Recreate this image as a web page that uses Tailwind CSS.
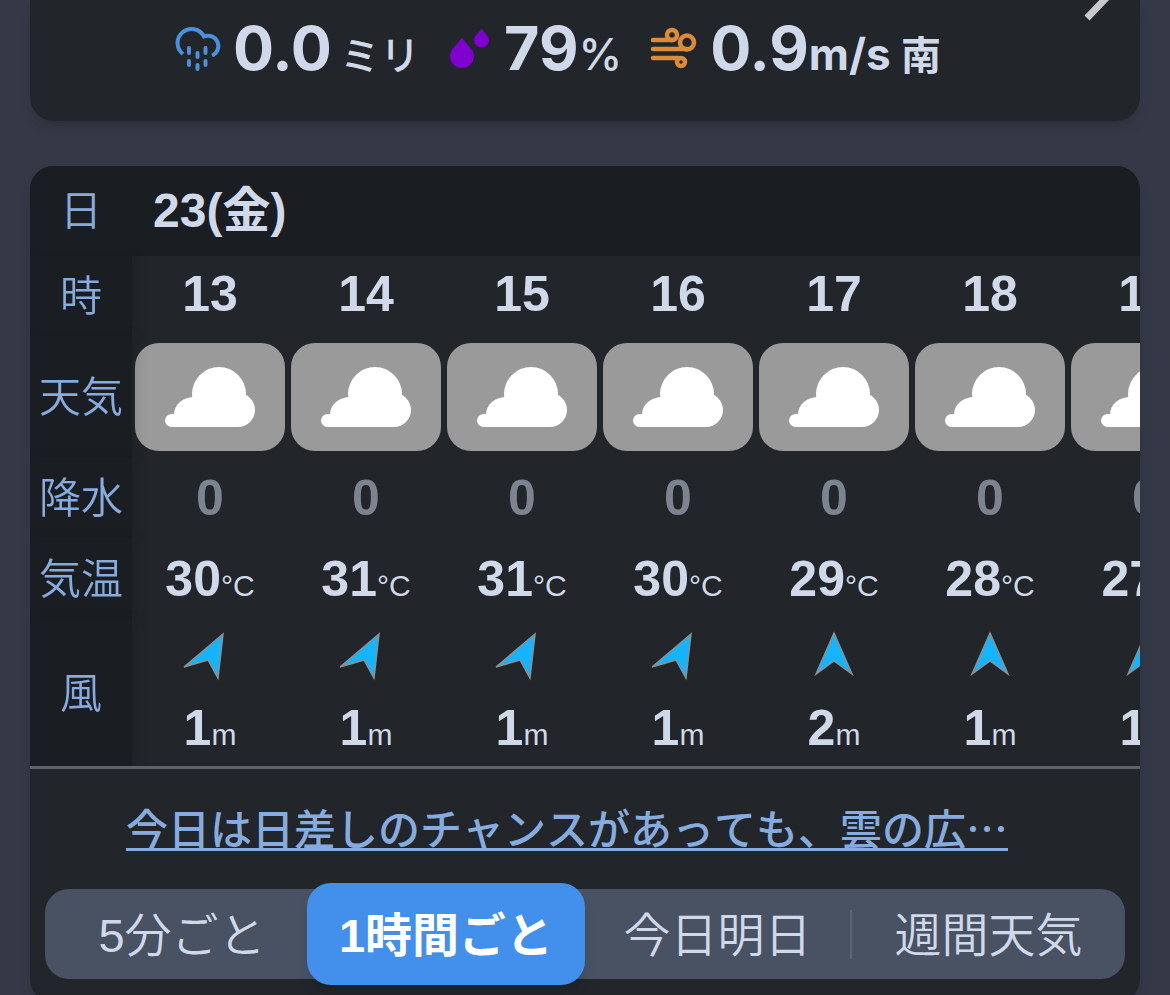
<!doctype html>
<html lang="ja">
<head>
  <meta charset="UTF-8" />
  <meta name="viewport" content="width=device-width, initial-scale=1.0" />
  <script src="https://cdn.jsdelivr.net/npm/@tailwindcss/browser@4"></script>
  <title>天気予報</title>
</head>
<body class="bg-[#353947] font-['Liberation_Sans','Noto_Sans_CJK_JP',sans-serif] text-[#d0d9e9]">
  <!-- shared icons -->
  <svg class="hidden">
    <symbol id="cloud" viewBox="0 0 150 108">
      <circle cx="84" cy="51" r="27" />
      <circle cx="103" cy="67" r="17" />
      <path d="M39 72C39 61 48 54 60 54H103V84H39Z" />
      <rect x="30" y="71" width="75" height="13" rx="6.5" />
    </symbol>
    <symbol id="wind-ne" viewBox="0 0 60 54">
      <path d="M43 5 38 49 28 31 4 38Z" />
    </symbol>
    <symbol id="wind-n" viewBox="0 0 60 54">
      <path d="M30 4 48 45 30 32 12 45Z" />
    </symbol>
  </svg>

  <main class="px-[30px] pb-8">
    <!-- current conditions -->
    <section class="relative rounded-b-3xl bg-[#22262b] pt-[18px] pb-[43px] pr-14 shadow-lg">
      <a href="#" aria-label="詳細" class="absolute -top-8 right-7">
        <svg class="h-14 w-7" viewBox="0 0 28 56" fill="none" stroke="#c9c9cc" stroke-width="7">
          <path d="M3 6 24 28 3 50" />
        </svg>
      </a>
      <div class="flex h-15 items-center justify-center gap-7 font-['Inter','Noto_Sans_CJK_JP',sans-serif] font-[650] whitespace-nowrap">
        <div class="flex items-center gap-3">
          <svg class="size-12 overflow-visible" viewBox="0 0 48 48" fill="none" stroke="#4a90dc" stroke-width="4">
            <path d="M10 30A14 14 0 1 1 31 12.500A10 10 0 1 1 39 31.500" />
            <path stroke-linecap="round" d="M16 24v5M16 37v4M24.500 29v4M24.500 41v4M32.500 24v5M32.500 37v4" />
          </svg>
          <p class="text-[61px] leading-[60px]">0.0<span class="ml-2 font-['Noto_Sans_CJK_JP'] text-[40px] leading-none font-medium">ミリ</span></p>
        </div>
        <div class="flex items-center gap-3">
          <svg class="h-12 w-11" viewBox="0 0 44 48" fill="#8000d2">
            <path d="M14 13.500C17 19 26 25 26 32A12 12 0 0 1 2 32C2 25 11 19 14 13.500Z" />
            <path d="M33.500 4.500C35.500 8.500 41 11.500 41 16A7.500 7.500 0 0 1 26 16C26 11.500 31.500 8.500 33.500 4.500Z" />
          </svg>
          <p class="text-[61px] leading-[60px]">79<span class="text-[44px] leading-none font-medium">%</span></p>
        </div>
        <div class="flex items-center gap-3">
          <svg class="size-12" viewBox="0 0 48 48" fill="none" stroke="#dc8b37" stroke-width="4.5" stroke-linecap="round">
            <path d="M3 16H23M3 25H37M3 34H29" />
            <circle cx="22" cy="11" r="5" />
            <circle cx="37" cy="18.500" r="7" />
            <circle cx="31" cy="38" r="4" />
          </svg>
          <p class="text-[61px] leading-[60px]">0.9<span class="text-[44px] leading-none">m/s <span class="text-[40px] font-bold">南</span></span></p>
        </div>
      </div>
    </section>

    <!-- hourly forecast -->
    <section class="mt-[45px] overflow-hidden rounded-3xl bg-[#22262b] pb-6 shadow-lg">
      <div class="overflow-x-auto border-b-3 border-[#5d636d] [scrollbar-width:none]">
        <table class="w-[1194px] table-fixed border-separate border-spacing-0 text-center text-[50px] leading-none font-bold">
          <colgroup>
            <col class="w-[102px]" />
            <col span="7" class="w-[156px]" />
          </colgroup>
          <tr class="h-[90px] bg-[#1a1d21]">
            <th scope="row" class="sticky left-0 z-10 bg-[#1a1d21] pt-0.5 text-[42px] font-[350] text-[#86acdf]">日</th>
            <td colspan="7" class="pl-[21px] text-left text-[48px]">23(金)</td>
          </tr>
          <tr class="h-20">
            <th scope="row" class="sticky left-0 z-10 bg-[#1a1d21] pt-0.5 text-[42px] font-[350] text-[#86acdf] shadow-[4px_0_12px_#0000001a]">時</th>
            <td class="pb-1">13</td>
            <td class="pb-1">14</td>
            <td class="pb-1">15</td>
            <td class="pb-1">16</td>
            <td class="pb-1">17</td>
            <td class="pb-1">18</td>
            <td class="pb-1">19</td>
          </tr>
          <tr class="h-[122px]">
            <th scope="row" class="sticky left-0 z-10 bg-[#1a1d21] pt-0.5 text-[42px] font-[350] text-[#86acdf] shadow-[4px_0_12px_#0000001a]">天気</th>
            <td class="px-[3px]"><svg role="img" aria-label="曇り" class="h-[108px] w-full rounded-3xl bg-[#9a9a9a] fill-white"><use href="#cloud" /></svg></td>
            <td class="px-[3px]"><svg role="img" aria-label="曇り" class="h-[108px] w-full rounded-3xl bg-[#9a9a9a] fill-white"><use href="#cloud" /></svg></td>
            <td class="px-[3px]"><svg role="img" aria-label="曇り" class="h-[108px] w-full rounded-3xl bg-[#9a9a9a] fill-white"><use href="#cloud" /></svg></td>
            <td class="px-[3px]"><svg role="img" aria-label="曇り" class="h-[108px] w-full rounded-3xl bg-[#9a9a9a] fill-white"><use href="#cloud" /></svg></td>
            <td class="px-[3px]"><svg role="img" aria-label="曇り" class="h-[108px] w-full rounded-3xl bg-[#9a9a9a] fill-white"><use href="#cloud" /></svg></td>
            <td class="px-[3px]"><svg role="img" aria-label="曇り" class="h-[108px] w-full rounded-3xl bg-[#9a9a9a] fill-white"><use href="#cloud" /></svg></td>
            <td class="px-[3px]"><svg role="img" aria-label="曇り" class="h-[108px] w-full rounded-3xl bg-[#9a9a9a] fill-white"><use href="#cloud" /></svg></td>
          </tr>
          <tr class="h-20 text-[#7d838f]">
            <th scope="row" class="sticky left-0 z-10 bg-[#1a1d21] pt-0.5 text-[42px] font-[350] text-[#86acdf] shadow-[4px_0_12px_#0000001a]">降水</th>
            <td>0</td>
            <td>0</td>
            <td>0</td>
            <td>0</td>
            <td>0</td>
            <td>0</td>
            <td>0</td>
          </tr>
          <tr class="h-[82px]">
            <th scope="row" class="sticky left-0 z-10 bg-[#1a1d21] pt-0.5 text-[42px] font-[350] text-[#86acdf] shadow-[4px_0_12px_#0000001a]">気温</th>
            <td>30<span class="text-[30px] font-normal">°C</span></td>
            <td>31<span class="text-[30px] font-normal">°C</span></td>
            <td>31<span class="text-[30px] font-normal">°C</span></td>
            <td>30<span class="text-[30px] font-normal">°C</span></td>
            <td>29<span class="text-[30px] font-normal">°C</span></td>
            <td>28<span class="text-[30px] font-normal">°C</span></td>
            <td>27<span class="text-[30px] font-normal">°C</span></td>
          </tr>
          <tr class="h-[146px]">
            <th scope="row" class="sticky left-0 z-10 bg-[#1a1d21] pt-0.5 text-[42px] font-[350] text-[#86acdf] shadow-[4px_0_12px_#0000001a]">風</th>
            <td class="pb-1"><svg class="mx-auto mb-5 h-[54px] w-[60px] fill-[#14b4ff] stroke-[#8f8f8f] stroke-[1.5]"><use href="#wind-ne" /></svg>1<span class="text-[30px] font-normal">m</span></td>
            <td class="pb-1"><svg class="mx-auto mb-5 h-[54px] w-[60px] fill-[#14b4ff] stroke-[#8f8f8f] stroke-[1.5]"><use href="#wind-ne" /></svg>1<span class="text-[30px] font-normal">m</span></td>
            <td class="pb-1"><svg class="mx-auto mb-5 h-[54px] w-[60px] fill-[#14b4ff] stroke-[#8f8f8f] stroke-[1.5]"><use href="#wind-ne" /></svg>1<span class="text-[30px] font-normal">m</span></td>
            <td class="pb-1"><svg class="mx-auto mb-5 h-[54px] w-[60px] fill-[#14b4ff] stroke-[#8f8f8f] stroke-[1.5]"><use href="#wind-ne" /></svg>1<span class="text-[30px] font-normal">m</span></td>
            <td class="pb-1"><svg class="mx-auto mb-5 h-[54px] w-[60px] fill-[#14b4ff] stroke-[#8f8f8f] stroke-[1.5]"><use href="#wind-n" /></svg>2<span class="text-[30px] font-normal">m</span></td>
            <td class="pb-1"><svg class="mx-auto mb-5 h-[54px] w-[60px] fill-[#14b4ff] stroke-[#8f8f8f] stroke-[1.5]"><use href="#wind-n" /></svg>1<span class="text-[30px] font-normal">m</span></td>
            <td class="pb-1"><svg class="mx-auto mb-5 h-[54px] w-[60px] fill-[#14b4ff] stroke-[#8f8f8f] stroke-[1.5]"><use href="#wind-n" /></svg>1<span class="text-[30px] font-normal">m</span></td>
          </tr>
        </table>
      </div>

      <p class="pt-7 pr-9 text-center font-['Noto_Sans_CJK_JP',sans-serif] text-[42px] leading-[60px] font-medium whitespace-nowrap [font-kerning:none]">
        <a href="#" class="text-[#86acdf] underline decoration-3 underline-offset-3">今日は日差しのチャンスがあっても、雲の広…</a>
      </p>

      <nav class="mx-[15px] mt-8 grid h-[90px] grid-cols-[262fr_278fr_267fr_273fr] items-center rounded-3xl bg-[#485263] text-[47px] leading-none font-[350] whitespace-nowrap">
        <button type="button" class="pt-0.5 pl-3">5分ごと</button>
        <button type="button" class="-my-1.5 h-[102px] rounded-3xl bg-[#428fec] pt-0.5 font-bold text-white shadow-lg">1時間ごと</button>
        <button type="button" class="border-r-2 border-[#5b6474] pt-0.5">今日明日</button>
        <button type="button" class="pt-0.5">週間天気</button>
      </nav>
    </section>
  </main>
</body>
</html>
